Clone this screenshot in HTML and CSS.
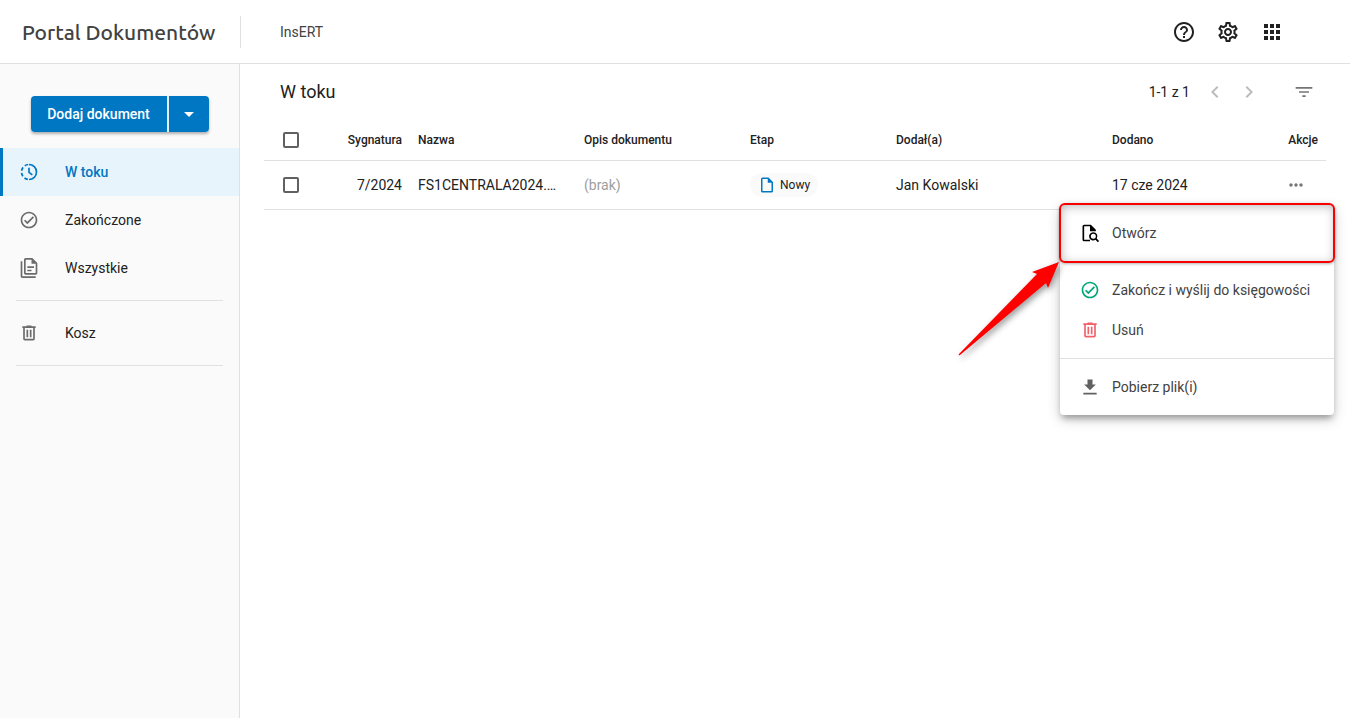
FILE: index.html
```
<!DOCTYPE html>
<html lang="pl">
<head>
  <meta charset="UTF-8">
  <meta name="viewport" content="width=device-width, initial-scale=1.0">
  <title>Portal Dokumentów</title>
  <link rel="stylesheet" href="styles.css">
</head>
<body>
  <header class="header">
    <h1 class="brand">Portal Dokumentów</h1>
    <span class="company">InsERT</span>
    <div class="header-actions">
      <button type="button" class="header-button" aria-label="Pomoc">
        <svg class="icon" viewBox="0 0 24 24"><path d="M11 18h2v-2h-2v2zm1-16C6.480 2 2 6.480 2 12s4.480 10 10 10 10-4.480 10-10S17.520 2 12 2zm0 18c-4.410 0-8-3.590-8-8s3.590-8 8-8 8 3.590 8 8-3.590 8-8 8zm0-14c-2.210 0-4 1.790-4 4h2c0-1.100.9-2 2-2s2 .9 2 2c0 2-3 1.750-3 5h2c0-2.250 3-2.500 3-5 0-2.210-1.790-4-4-4z"/></svg>
      </button>
      <button type="button" class="header-button" aria-label="Ustawienia">
        <svg class="icon" viewBox="0 0 24 24"><path d="M19.430 12.980c.04-.32.07-.64.07-.98s-.03-.66-.07-.98l2.110-1.650c.19-.15.24-.42.12-.64l-2-3.460c-.12-.22-.39-.3-.61-.22l-2.490 1c-.52-.4-1.080-.73-1.690-.98l-.38-2.650C14.460 2.180 14.250 2 14 2h-4c-.25 0-.46.18-.49.42l-.38 2.650c-.61.25-1.170.59-1.690.98l-2.490-1c-.23-.09-.49 0-.61.22l-2 3.460c-.13.22-.07.49.12.64l2.110 1.650c-.04.32-.07.65-.07.98s.03.66.07.98l-2.110 1.650c-.19.15-.24.42-.12.64l2 3.460c.12.22.39.3.61.22l2.490-1c.52.4 1.080.73 1.690.98l.38 2.650c.03.24.24.42.49.42h4c.25 0 .46-.18.49-.42l.38-2.650c.61-.25 1.170-.59 1.690-.98l2.490 1c.23.09.49 0 .61-.22l2-3.460c.12-.22.07-.49-.12-.64l-2.110-1.650zm-1.980-1.710c.04.31.05.52.05.73s-.02.43-.05.73l-.14 1.130.89.7 1.080.84-.7 1.210-1.270-.51-1.040-.42-.9.68c-.43.32-.84.56-1.250.73l-1.060.43-.16 1.130-.2 1.350h-1.400l-.19-1.350-.16-1.130-1.060-.43c-.43-.18-.83-.41-1.230-.71l-.91-.7-1.060.43-1.270.51-.7-1.210 1.080-.84.89-.7-.14-1.130c-.03-.31-.05-.54-.05-.74s.02-.43.05-.73l.14-1.130-.89-.7-1.080-.84.7-1.210 1.270.51 1.040.42.9-.68c.43-.32.84-.56 1.250-.73l1.060-.43.16-1.130.2-1.350h1.390l.19 1.350.16 1.130 1.060.43c.43.18.83.41 1.230.71l.91.7 1.060-.43 1.270-.51.7 1.210-1.070.85-.89.7.14 1.130zM12 8c-2.210 0-4 1.790-4 4s1.790 4 4 4 4-1.790 4-4-1.790-4-4-4zm0 6c-1.100 0-2-.9-2-2s.9-2 2-2 2 .9 2 2-.9 2-2 2z"/></svg>
      </button>
      <button type="button" class="header-button" aria-label="Aplikacje">
        <svg class="icon" viewBox="0 0 24 24"><path d="M4 8h4V4H4v4zm6 12h4v-4h-4v4zm-6 0h4v-4H4v4zm0-6h4v-4H4v4zm6 0h4v-4h-4v4zm6-10v4h4V4h-4zm-6 4h4V4h-4v4zm6 6h4v-4h-4v4zm0 6h4v-4h-4v4z"/></svg>
      </button>
    </div>
  </header>

  <div class="layout">
    <aside class="sidebar">
      <div class="split-button">
        <button type="button" class="add-button">Dodaj dokument</button>
        <button type="button" class="add-more" aria-label="Więcej opcji dodawania">
          <svg class="icon" viewBox="0 0 24 24"><path d="M7 10l5 5 5-5z"/></svg>
        </button>
      </div>

      <nav class="nav">
        <a href="#" class="nav-item active">
          <svg class="icon-small outline" viewBox="0 0 24 24">
            <path d="M12 3a9 9 0 0 1 0 18"/>
            <path d="M12 21a9 9 0 0 1-9-9 9 9 0 0 1 9-9" stroke-dasharray="4.400 2.700" stroke-dashoffset="-1.400"/>
            <path d="M12 7v5.500l4 3"/>
          </svg>
          W toku
        </a>
        <a href="#" class="nav-item">
          <svg class="icon-small" viewBox="0 0 24 24"><path d="M12 2C6.500 2 2 6.500 2 12s4.500 10 10 10 10-4.500 10-10S17.500 2 12 2m0 18c-4.410 0-8-3.590-8-8s3.590-8 8-8 8 3.590 8 8-3.590 8-8 8m4.590-12.420L10 14.170l-2.590-2.580L6 13l4 4 8-8-1.410-1.420z"/></svg>
          Zakończone
        </a>
        <a href="#" class="nav-item">
          <svg class="icon-small" viewBox="0 0 24 24"><path d="M16 0H8C6.900 0 6 .9 6 2v16c0 1.100.9 2 2 2h12c1.100 0 2-.9 2-2V6l-6-6m4 18H8V2h7v5h5v11M4 4v18h16v2H4c-1.100 0-2-.9-2-2V4h2m6 6v2h8v-2h-8m0 4v2h5v-2h-5z"/></svg>
          Wszystkie
        </a>
        <hr class="nav-line">
        <a href="#" class="nav-item">
          <svg class="icon-small" viewBox="0 0 24 24"><path d="M9 3v1H4v2h1v13a2 2 0 0 0 2 2h10a2 2 0 0 0 2-2V6h1V4h-5V3H9M7 6h10v13H7V6m2 2v9h2V8H9m4 0v9h2V8h-2z"/></svg>
          Kosz
        </a>
        <hr class="nav-line">
      </nav>
    </aside>

    <main class="content">
      <div class="toolbar">
        <h2 class="toolbar-title">W toku</h2>
        <span class="range">1-1 z 1</span>
        <button type="button" class="tool-button" aria-label="Poprzednia strona" disabled>
          <svg class="icon" viewBox="0 0 24 24"><path d="M15.410 7.410L14 6l-6 6 6 6 1.410-1.410L10.830 12z"/></svg>
        </button>
        <button type="button" class="tool-button" aria-label="Następna strona" disabled>
          <svg class="icon" viewBox="0 0 24 24"><path d="M10 6L8.590 7.410 13.170 12l-4.580 4.590L10 18l6-6z"/></svg>
        </button>
        <button type="button" class="tool-button filter" aria-label="Filtruj">
          <svg class="icon-small" viewBox="0 0 24 24"><path d="M10 18h4v-2h-4v2zM2 6v2h20V6H2zm4 7h12v-2H6v2z"/></svg>
        </button>
      </div>

      <table class="documents">
        <colgroup>
          <col class="col-check">
          <col class="col-signature">
          <col class="col-name">
          <col class="col-description">
          <col class="col-stage">
          <col class="col-author">
          <col>
          <col class="col-actions">
        </colgroup>
        <thead>
          <tr>
            <th class="check"><input type="checkbox" class="checkbox" aria-label="Zaznacz wszystkie"></th>
            <th class="right">Sygnatura</th>
            <th>Nazwa</th>
            <th>Opis dokumentu</th>
            <th>Etap</th>
            <th>Dodał(a)</th>
            <th>Dodano</th>
            <th class="right">Akcje</th>
          </tr>
        </thead>
        <tbody>
          <tr>
            <td class="check"><input type="checkbox" class="checkbox" aria-label="Zaznacz dokument 7/2024"></td>
            <td class="right">7/2024</td>
            <td>FS1CENTRALA2024.…</td>
            <td class="empty">(brak)</td>
            <td>
              <span class="chip">
                <svg class="chip-icon" viewBox="0 0 24 24"><path d="M14 2H6a2 2 0 0 0-2 2v16a2 2 0 0 0 2 2h12a2 2 0 0 0 2-2V8l-6-6m4 18H6V4h7v5h5v11z"/></svg>
                Nowy
              </span>
            </td>
            <td>Jan Kowalski</td>
            <td>17 cze 2024</td>
            <td class="actions">
              <button type="button" class="more-button" aria-label="Akcje">
                <svg class="icon-small" viewBox="0 0 24 24"><path d="M6 10c-1.100 0-2 .9-2 2s.9 2 2 2 2-.9 2-2-.9-2-2-2zm12 0c-1.100 0-2 .9-2 2s.9 2 2 2 2-.9 2-2-.9-2-2-2zm-6 0c-1.100 0-2 .9-2 2s.9 2 2 2 2-.9 2-2-.9-2-2-2z"/></svg>
              </button>
              <div class="menu">
                <button type="button" class="menu-item">
                  <svg class="icon-small black" viewBox="0 0 24 24"><path d="M13 2H5a2 2 0 0 0-2 2v16a2 2 0 0 0 2 2h7v-2H5V4h7v6h7V8z"/><path d="M16 11a5 5 0 1 0 2.600 9.200l2.800 2.800 1.500-1.500-2.800-2.800A5 5 0 0 0 16 11zm0 2a3 3 0 1 1 0 6 3 3 0 0 1 0-6z"/></svg>
                  Otwórz
                </button>
                <hr class="menu-line">
                <button type="button" class="menu-item">
                  <svg class="icon-small green" viewBox="0 0 24 24"><path d="M12 2C6.500 2 2 6.500 2 12s4.500 10 10 10 10-4.500 10-10S17.500 2 12 2m0 18c-4.410 0-8-3.590-8-8s3.590-8 8-8 8 3.590 8 8-3.590 8-8 8m4.590-12.420L10 14.170l-2.590-2.580L6 13l4 4 8-8-1.410-1.420z"/></svg>
                  Zakończ i wyślij do księgowości
                </button>
                <button type="button" class="menu-item">
                  <svg class="icon-small red" viewBox="0 0 24 24"><path d="M9 3v1H4v2h1v13a2 2 0 0 0 2 2h10a2 2 0 0 0 2-2V6h1V4h-5V3H9M7 6h10v13H7V6m2 2v9h2V8H9m4 0v9h2V8h-2z"/></svg>
                  Usuń
                </button>
                <hr class="menu-line">
                <button type="button" class="menu-item">
                  <svg class="icon-small" viewBox="0 0 24 24"><path d="M19 9h-4V3H9v6H5l7 7 7-7zM4 19v2h16v-2H4z"/></svg>
                  Pobierz plik(i)
                </button>
                <div class="highlight"></div>
                <svg class="arrow" viewBox="0 0 102 96"><path d="M101 1L74 11l5 2L1 93q-1 2 1 1l86-72 2 5z"/></svg>
              </div>
            </td>
          </tr>
        </tbody>
      </table>
    </main>
  </div>
</body>
</html>
```

FILE: styles.css
```
* {
  box-sizing: border-box;
}

body {
  margin: 0;
  min-height: 100vh;
  display: flex;
  flex-direction: column;
  font-family: Roboto, sans-serif;
  font-size: 14px;
  line-height: 20px;
  color: #212121;
  background-color: #fff;
}

button {
  margin: 0;
  padding: 0;
  border: none;
  background: none;
  font: inherit;
  color: inherit;
  cursor: pointer;
}

svg {
  display: block;
  flex: none;
  fill: currentColor;
}

.icon {
  width: 24px;
  height: 24px;
}

.icon-small {
  width: 20px;
  height: 20px;
}

.outline {
  fill: none;
  stroke: currentColor;
  stroke-width: 2;
}

/* header */
.header {
  display: flex;
  align-items: center;
  height: 64px;
  padding: 0 56px 0 22px;
  border-bottom: 1px solid #e0e0e0;
}

.brand {
  width: 219px;
  margin: 0;
  border-right: 1px solid #e0e0e0;
  font-family: Ubuntu, "Noto Sans", sans-serif;
  font-size: 21px;
  font-weight: 500;
  line-height: 32px;
  color: #424242;
  white-space: nowrap;
}

.company {
  margin-left: 39px;
  color: #424242;
}

.header-actions {
  display: flex;
  margin-left: auto;
}

.header-button {
  display: flex;
  justify-content: center;
  width: 44px;
}

/* sidebar */
.layout {
  display: flex;
  flex: 1;
}

.sidebar {
  flex: none;
  width: 240px;
  padding-top: 32px;
  border-right: 1px solid #e0e0e0;
  background-color: #fafafa;
}

.split-button {
  display: flex;
  gap: 2px;
  width: 178px;
  height: 36px;
  margin: 0 auto 16px;
  border-radius: 4px;
  box-shadow: 0 2px 3px rgba(0, 0, 0, 0.3);
  background-color: #e4eef5;
}

.add-button,
.add-more {
  background-color: #0077c2;
  color: #fff;
}

.add-button {
  flex: 1;
  border-radius: 4px 0 0 4px;
  font-weight: 500;
}

.add-more {
  display: flex;
  align-items: center;
  justify-content: center;
  width: 40px;
  border-radius: 0 4px 4px 0;
}

.nav-item {
  display: flex;
  align-items: center;
  gap: 26px;
  height: 48px;
  padding-left: 16px;
  border-left: 3px solid transparent;
  color: #212121;
  text-decoration: none;
}

.nav-item svg {
  color: #6b6b6b;
}

.nav-item.active {
  border-color: #0077c2;
  background-color: #e8f4fb;
  color: #0077c2;
  font-weight: 500;
}

.nav-item.active svg {
  color: #0077c2;
}

.nav-line {
  margin: 8px 16px;
  border: none;
  border-top: 1px solid #e0e0e0;
}

/* content */
.content {
  flex: 1;
  min-width: 0;
  padding: 0 24px;
}

.toolbar {
  display: flex;
  align-items: center;
  height: 56px;
  padding: 0 5px 0 16px;
}

.toolbar-title {
  margin: 0 auto 0 0;
  font-size: 18px;
  font-weight: 400;
}

.range {
  margin-right: 8px;
}

.tool-button {
  display: flex;
  align-items: center;
  justify-content: center;
  width: 34px;
  height: 34px;
  color: #757575;
}

.tool-button:disabled {
  color: #bdbdbd;
  cursor: default;
}

.filter {
  margin-left: 21px;
}

.documents {
  width: 100%;
  table-layout: fixed;
  border-collapse: separate;
  border-spacing: 0;
}

.col-check { width: 54px; }
.col-signature { width: 92px; }
.col-name { width: 166px; }
.col-description { width: 166px; }
.col-stage { width: 146px; }
.col-author { width: 216px; }
.col-actions { width: 64px; }

.documents th,
.documents td {
  padding: 0 8px;
  border-bottom: 1px solid #e0e0e0;
  text-align: left;
  white-space: nowrap;
}

.documents th {
  height: 41px;
  font-size: 12px;
  font-weight: 500;
}

.documents td {
  height: 49px;
}

.documents .right {
  text-align: right;
}

.documents .check {
  padding: 0 19px;
}

.documents .empty {
  color: #9e9e9e;
}

.checkbox {
  display: block;
  appearance: none;
  width: 16px;
  height: 16px;
  margin: 0;
  border: 2px solid #616161;
  border-radius: 2px;
}

.checkbox:checked {
  border-color: #0077c2;
  background-color: #0077c2;
}

.chip {
  display: flex;
  align-items: center;
  gap: 4px;
  width: fit-content;
  height: 24px;
  padding: 0 8px;
  border-radius: 12px;
  background-color: #fafafa;
  font-size: 12px;
}

.chip-icon {
  width: 18px;
  height: 18px;
  color: #0077c2;
}

.documents .actions {
  position: relative;
}

.more-button {
  display: flex;
  justify-content: center;
  width: 44px;
  margin-left: auto;
  color: #757575;
}

/* row menu */
.menu {
  position: absolute;
  top: 44px;
  right: -8px;
  width: 274px;
  padding: 8px 0;
  border-radius: 4px;
  background-color: #fff;
  box-shadow: 0 5px 6px -2px rgba(0, 0, 0, 0.3), 0 4px 14px rgba(0, 0, 0, 0.2);
}

.menu-item {
  display: flex;
  align-items: center;
  gap: 12px;
  width: 100%;
  height: 40px;
  padding: 0 16px 0 20px;
  color: #424242;
  text-align: left;
}

.menu-item:hover {
  background-color: #f5f5f5;
}

.menu-line {
  margin: 8px 0;
  border: none;
  border-top: 1px solid #e0e0e0;
}

.menu-item svg {
  color: #616161;
}

.menu-item .black {
  color: #000;
}

.menu-item .green {
  color: #00a878;
}

.menu-item .red {
  color: #f0616a;
}

.highlight {
  position: absolute;
  top: -2px;
  left: -1px;
  right: -1px;
  height: 60px;
  border: 2px solid #f60000;
  border-radius: 6px;
  box-shadow: 0 1px 3px rgba(0, 0, 0, 0.3), inset 1px 2px 10px rgba(0, 0, 0, 0.25);
  pointer-events: none;
}

.arrow {
  position: absolute;
  top: 56px;
  left: -102px;
  width: 102px;
  height: 96px;
  fill: #f00;
  filter: drop-shadow(2px 3px 3px rgba(0, 0, 0, 0.4));
  overflow: visible;
  pointer-events: none;
}
```
